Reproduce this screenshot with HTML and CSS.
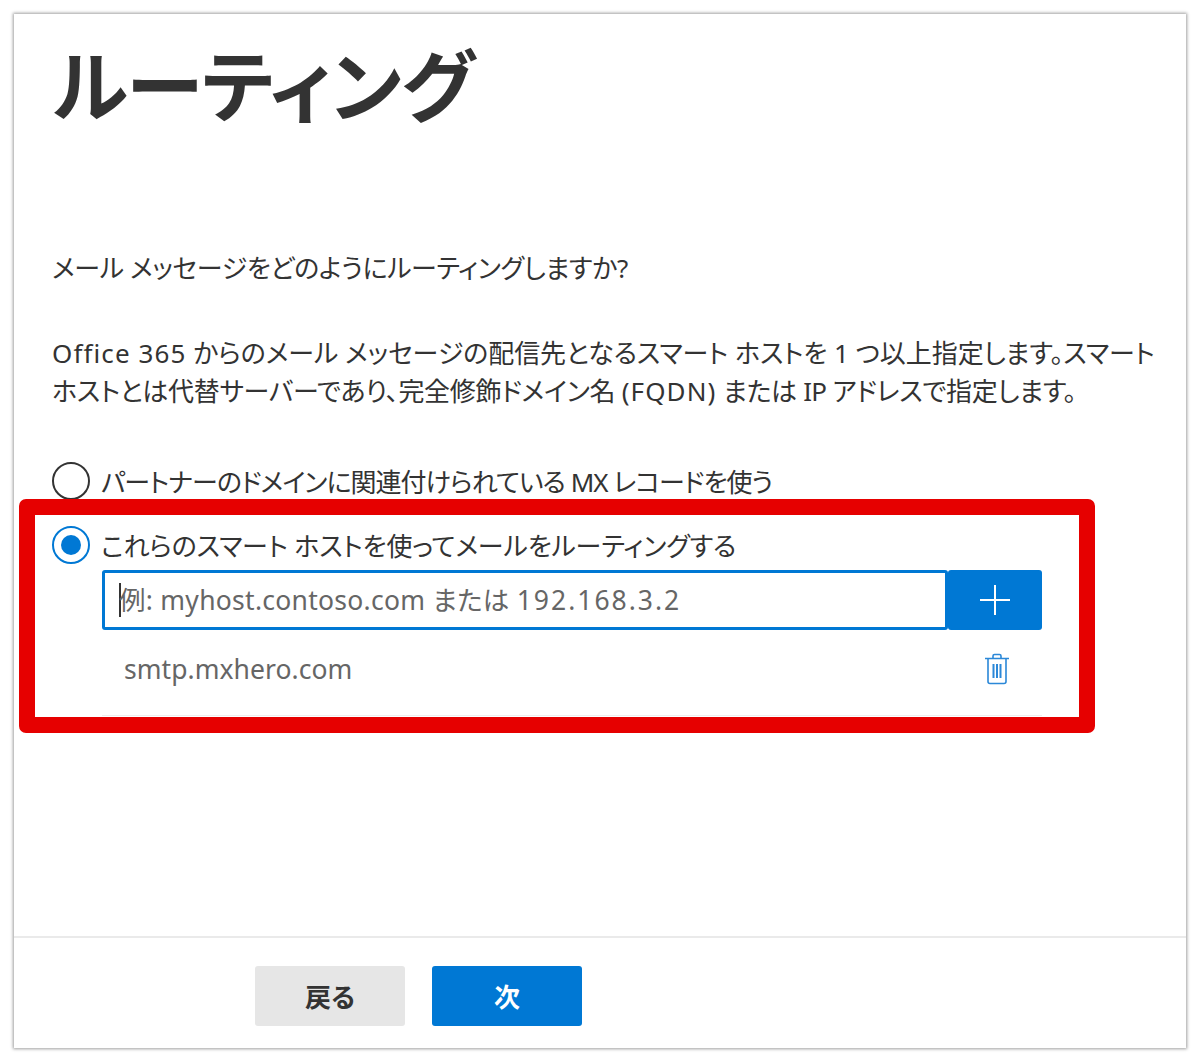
FILE: index.html
```html
<!DOCTYPE html>
<html lang="ja">
<head>
<meta charset="utf-8">
<title>ルーティング</title>
<link rel="stylesheet" href="styles.css">
</head>
<body>
<main class="card">
  <div class="content">
    <h1 class="title">ルーティング</h1>
    <p class="question">メール メッセージをどのようにルーティングしますか?</p>
    <p class="desc"><span class="latin">Office 365</span> からのメール メッセージの配信先となるスマート ホストを 1 つ以上指定します。スマート<br><span class="desc-tight">ホストとは代替サーバーであり、完全修飾ドメイン名 <span class="latin">(FQDN)</span> または <span class="abbr">IP</span> アドレスで指定します。</span></p>
    <div class="option option-first">
      <span class="radio"></span>
      <span class="option-label">パートナーのドメインに関連付けられている MX レコードを使う</span>
    </div>
    <div class="option option-second">
      <span class="radio radio-on"><span class="radio-dot"></span></span>
      <span class="option-label">これらのスマート ホストを使ってメールをルーティングする</span>
    </div>
    <div class="hosts">
      <div class="input-row">
        <div class="input"><span class="caret"></span><span class="placeholder">例: myhost.contoso.com または <span class="digits">192.168.3.2</span></span></div>
        <div class="add-btn">
          <svg class="plus" width="32" height="32" viewBox="0 0 32 32"><path d="M16 1v30M1 16h30" stroke="#fff" stroke-width="2" fill="none"/></svg>
        </div>
      </div>
      <div class="host-row">
        <span class="host-name">smtp.mxhero.com</span>
        <svg class="trash" width="26" height="32" viewBox="0 0 26 32" fill="none" stroke="#2b88d8" stroke-width="1.6"><path d="M1 5.500h24M4 5.500v23a2 2 0 0 0 2 2h14a2 2 0 0 0 2-2v-23M9 5.500v-2.500a1.500 1.500 0 0 1 1.500-1.500h5a1.500 1.500 0 0 1 1.500 1.500v2.500"/><path d="M9.500 11v14M13 11v14M16.500 11v14" stroke-width="2"/></svg>
      </div>
    </div>
  </div>
  <footer class="footer">
    <div class="btn btn-back">戻る</div>
    <div class="btn btn-next">次</div>
  </footer>
  <div class="highlight"></div>
</main>
</body>
</html>
```
FILE: styles.css
```css
* { box-sizing: border-box; }
html, body { margin: 0; padding: 0; background: #fff; }
body {
  height: 1061px;
  padding: 14px 14px 13px 14px;
  font-family: "Noto Sans", "Noto Sans CJK JP", sans-serif;
  font-feature-settings: "palt";
  color: #333;
  overflow: hidden;
}
.card {
  position: relative;
  height: 1034px;
  background: #fff;
  box-shadow: 0 0 3px 1px rgba(0,0,0,.38);
  display: flex;
  flex-direction: column;
}
.content { flex: 1; padding: 0 20px 0 38px; }
.title {
  margin: 17px 0 0;
  font-size: 78px;
  line-height: 110px;
  font-weight: 700;
  color: #333;
  letter-spacing: -.8px;
}
.question {
  margin: 108px 0 0;
  font-size: 26px;
  line-height: 38px;
  letter-spacing: -.35px;
}
.desc {
  margin: 47px 0 0;
  font-size: 26px;
  line-height: 38px;
  letter-spacing: -.05px;
  white-space: nowrap;
}
.desc-tight { letter-spacing: -.28px; }
.latin { letter-spacing: 1.1px; }
.abbr { letter-spacing: -1px; }
.option { display: flex; align-items: center; gap: 11px; height: 38px; font-size: 26px; }
.option-first { margin-top: 52px; letter-spacing: -.95px; }
.option-second { margin-top: 26px; letter-spacing: -.12px; }
.radio {
  width: 38px; height: 38px; border-radius: 50%;
  border: 2px solid #333; flex: none;
  display: flex; align-items: center; justify-content: center;
}
.radio-on { border-color: #0078d4; }
.radio-dot { width: 20px; height: 20px; border-radius: 50%; background: #0078d4; }
.hosts { margin: 6px 0 0 50px; width: 940px; }
.input-row { display: flex; height: 60px; }
.input {
  flex: 1;
  border: 3px solid #0078d4;
  border-radius: 3px;
  padding: 0 0 4px 14px;
  display: flex; align-items: center;
}
.caret { width: 2px; height: 34px; background: #333; margin: 4px -2px 0 0; flex: none; }
.placeholder { font-size: 26.500px; color: #666; white-space: nowrap; letter-spacing: .27px; }
.digits { letter-spacing: 2px; }
.add-btn {
  width: 94px; background: #0078d4; border-radius: 3px;
  display: flex; align-items: center; justify-content: center;
}
.host-row {
  height: 86px;
  border-bottom: 1px solid #eee;
  padding: 0 32px 8px 22px;
  display: flex; align-items: center; justify-content: space-between;
}
.host-name { font-size: 26.500px; color: #666; letter-spacing: .05px; }
.footer {
  height: 112px;
  border-top: 2px solid #eaeaea;
  padding: 28px 0 0 241px;
  display: flex; gap: 27px;
  align-items: flex-start;
}
.btn {
  width: 150px; height: 60px; border-radius: 3px;
  display: flex; align-items: center; justify-content: center;
  font-size: 26px; font-weight: 700;
}
.btn-back { background: #e6e6e6; color: #333; }
.btn-next { background: #0078d4; color: #fff; }
.highlight {
  position: absolute;
  left: 5px; top: 485px;
  width: 1076px; height: 234px;
  border: 16px solid #e60000;
  border-radius: 7px;
  pointer-events: none;
}
```
